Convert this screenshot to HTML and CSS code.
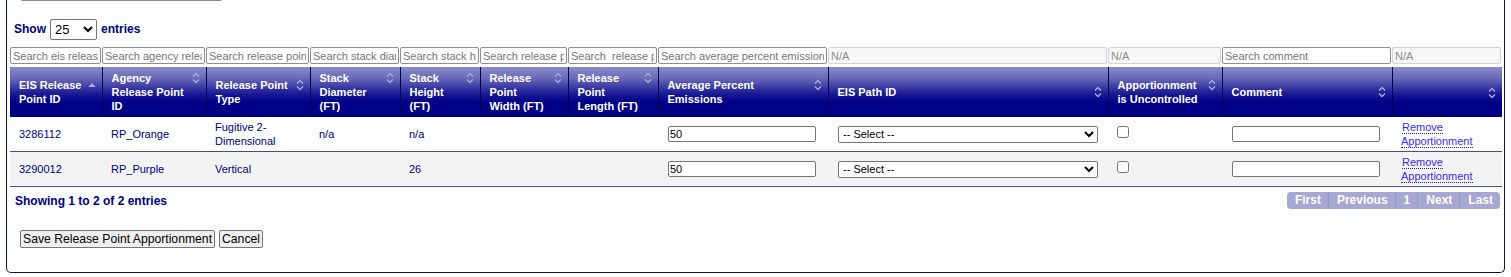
FILE: index.html
```html
<!DOCTYPE html>
<html lang="en">
<head>
    <meta charset="UTF-8">
    <title>Release Point Apportionment</title>
    <link rel="stylesheet" href="styles.css">
</head>
<body>
    <div class="panel">
        <div class="top-btn"></div>

        <div class="length">
            Show
            <select class="length-select">
                <option>25</option>
            </select>
            entries
        </div>

        <table class="grid">
            <colgroup>
                <col style="width:92px"><col style="width:104px"><col style="width:104px"><col style="width:90px">
                <col style="width:80px"><col style="width:88px"><col style="width:90px"><col style="width:170px">
                <col style="width:280px"><col style="width:114px"><col style="width:170px"><col style="width:110px">
            </colgroup>
            <thead>
                <tr class="filters">
                    <th><input class="filter" placeholder="Search eis release point id"></th>
                    <th><input class="filter" placeholder="Search agency release point id"></th>
                    <th><input class="filter" placeholder="Search release point type"></th>
                    <th><input class="filter" placeholder="Search stack diameter"></th>
                    <th><input class="filter" placeholder="Search stack height"></th>
                    <th><input class="filter" placeholder="Search release point width"></th>
                    <th><input class="filter" placeholder="Search  release point length"></th>
                    <th><input class="filter" placeholder="Search average percent emissions"></th>
                    <th><input class="filter na" value="N/A" disabled></th>
                    <th><input class="filter na" value="N/A" disabled></th>
                    <th><input class="filter" placeholder="Search comment"></th>
                    <th><input class="filter na" value="N/A" disabled></th>
                </tr>
                <tr class="heads">
                    <th><div class="sort"><span>EIS Release Point ID</span><i class="asc"></i></div></th>
                    <th><div class="sort"><span>Agency Release Point ID</span><i class="both"></i></div></th>
                    <th><div class="sort"><span>Release Point Type</span><i class="both"></i></div></th>
                    <th><div class="sort"><span>Stack Diameter (FT)</span><i class="both"></i></div></th>
                    <th><div class="sort"><span>Stack Height (FT)</span><i class="both"></i></div></th>
                    <th><div class="sort"><span>Release Point Width (FT)</span><i class="both"></i></div></th>
                    <th><div class="sort"><span>Release Point Length (FT)</span><i class="both"></i></div></th>
                    <th><div class="sort"><span>Average Percent Emissions</span><i class="both"></i></div></th>
                    <th><div class="sort"><span>EIS Path ID</span><i class="both"></i></div></th>
                    <th><div class="sort"><span>Apportionment is Uncontrolled</span><i class="both"></i></div></th>
                    <th><div class="sort"><span>Comment</span><i class="both"></i></div></th>
                    <th><div class="sort"><span></span><i class="both"></i></div></th>
                </tr>
            </thead>
            <tbody>
                <tr class="odd">
                    <td>3286112</td>
                    <td>RP_Orange</td>
                    <td>Fugitive 2-Dimensional</td>
                    <td>n/a</td>
                    <td>n/a</td>
                    <td></td>
                    <td></td>
                    <td><input class="field" value="50"></td>
                    <td><select class="path"><option>-- Select --</option></select></td>
                    <td><input type="checkbox" class="check"></td>
                    <td><input class="field"></td>
                    <td><a href="#" class="remove">Remove Apportionment</a></td>
                </tr>
                <tr class="even">
                    <td>3290012</td>
                    <td>RP_Purple</td>
                    <td>Vertical</td>
                    <td></td>
                    <td>26</td>
                    <td></td>
                    <td></td>
                    <td><input class="field" value="50"></td>
                    <td><select class="path"><option>-- Select --</option></select></td>
                    <td><input type="checkbox" class="check"></td>
                    <td><input class="field"></td>
                    <td><a href="#" class="remove">Remove Apportionment</a></td>
                </tr>
            </tbody>
        </table>

        <div class="table-foot">
            <div class="info">Showing 1 to 2 of 2 entries</div>
            <div class="paging">
                <span>First</span><span>Previous</span><span>1</span><span>Next</span><span>Last</span>
            </div>
        </div>

        <div class="actions">
            <button class="btn">Save Release Point Apportionment</button>
            <button class="btn">Cancel</button>
        </div>
    </div>
</body>
</html>
```

FILE: styles.css
```css
body {
    margin: 0;
    font-family: "Liberation Sans", Arial, sans-serif;
    background: #ffffff;
    color: #000080;
}

.panel {
    display: flow-root;
    margin-left: 6px;
    width: 1499px;
    height: 273px;
    box-sizing: border-box;
    border: 1px solid #10105e;
    border-top: none;
    border-radius: 0 0 5px 5px;
    background: #fcfefe;
    padding: 0 0 0 3px;
}

.top-btn {
    width: 201px;
    height: 18px;
    margin: -19px 0 0 10px;
    border: 1px solid #8a8a8a;
    border-radius: 3px;
    background: #f4f4f4;
}

.length {
    margin: 17px 0 0 4px;
    font-size: 12px;
    font-weight: bold;
    color: #000080;
    display: flex;
    align-items: center;
    gap: 4px;
    height: 22px;
}

.length-select {
    width: 47px;
    height: 21px;
    font-family: "Liberation Sans", Arial, sans-serif;
    font-size: 13px;
    color: #000;
    border: 1px solid #767676;
    border-radius: 2px;
    background: #fff;
}

.grid {
    margin-top: 7px;
    width: 1492px;
    table-layout: fixed;
    border-collapse: collapse;
    font-size: 11px;
}

.filters th {
    padding: 0 1px 3px 0;
    height: 20px;
    box-sizing: border-box;
}

.filter {
    display: block;
    width: 100%;
    height: 17px;
    box-sizing: border-box;
    margin: 0;
    padding: 0 2px;
    border: 1px solid #8f8f8f;
    border-radius: 2px;
    font-family: "Liberation Sans", Arial, sans-serif;
    font-size: 11px;
    color: #000;
    background: #fff;
}

.filter::placeholder {
    color: #767676;
}

.filter.na {
    background: #f6f6f6;
    border-color: #d4d4d4;
    color: #8d8d8d;
}

.heads th {
    height: 50px;
    padding: 0 6px 0 9px;
    box-sizing: border-box;
    text-align: left;
    vertical-align: middle;
    color: #ffffff;
    font-size: 11px;
    font-weight: bold;
    line-height: 14px;
    border-left: 1px solid #00004a;
    background: linear-gradient(#8a8ac9 0%, #6a6ab8 22%, #1d1d96 52%, #000088 70%, #000080 100%);
}

.heads th:first-child {
    border-left: none;
}

.sort {
    display: flex;
    align-items: flex-start;
    gap: 4px;
}

.sort span {
    flex: 1;
}

.sort i {
    width: 8px;
    height: 12px;
    margin-top: 1px;
    display: block;
    flex: none;
    background-repeat: no-repeat;
    background-position: center;
}

.sort i.both {
    background-image: url("data:image/svg+xml,%3Csvg xmlns='http://www.w3.org/2000/svg' width='8' height='12'%3E%3Cpath d='M1 4.5 L4 1.5 L7 4.5 M1 7.5 L4 10.5 L7 7.5' fill='none' stroke='%23a9a9d9' stroke-width='1.4'/%3E%3C/svg%3E");
}

.sort i.asc {
    background-image: url("data:image/svg+xml,%3Csvg xmlns='http://www.w3.org/2000/svg' width='8' height='12'%3E%3Cpath d='M0.5 8 L4 4 L7.5 8 Z' fill='%23a9a9d9'/%3E%3C/svg%3E");
}

tbody td {
    padding: 3px 10px 3px 9px;
    height: 34px;
    box-sizing: border-box;
    vertical-align: middle;
    line-height: 14px;
    color: #000080;
    border-bottom: 1px solid #4a4a86;
}

tbody tr.odd td {
    background: #fcfefe;
}

tbody tr.even td {
    background: #f3f3f3;
}

.field {
    display: block;
    width: 148px;
    height: 16px;
    box-sizing: border-box;
    margin: 0 0 0 1px;
    padding: 0 1px;
    border: 1px solid #767676;
    border-radius: 2px;
    font-family: "Liberation Sans", Arial, sans-serif;
    font-size: 11px;
    color: #000;
    background: #fff;
}

.path {
    display: block;
    width: 260px;
    height: 17px;
    margin: 0 0 0 1px;
    padding: 0;
    border: 1px solid #767676;
    border-radius: 2px;
    font-family: "Liberation Sans", Arial, sans-serif;
    font-size: 11px;
    color: #000;
    background: #fff;
}

.check {
    display: block;
    margin: -4px 0 0 0;
    width: 12px;
    height: 12px;
}

.remove {
    margin-left: 1px;
    color: #3a2cf2;
    text-decoration: none;
    border-bottom: 1px dotted #2a1aa0;
}

.table-foot {
    display: flex;
    justify-content: space-between;
    align-items: flex-start;
    padding: 5px 4px 0 5px;
}

.info {
    font-size: 12px;
    font-weight: bold;
    color: #000080;
    padding-top: 2px;
}

.paging {
    display: flex;
    height: 17px;
    background: #a7a7d3;
    border-radius: 4px;
    font-size: 12px;
    font-weight: bold;
    color: #fdfdff;
    line-height: 17px;
}

.paging span {
    padding: 0 7px 0 8px;
    border-left: 1px solid #9898c6;
}

.paging span:first-child {
    border-left: none;
}

.actions {
    margin: 21px 0 0 10px;
    display: flex;
    gap: 4px;
}

.btn {
    font-family: "Liberation Sans", Arial, sans-serif;
    font-size: 12.2px;
    color: #000;
    padding: 0 2px;
    height: 18px;
    line-height: 15px;
    border: 1px solid #767676;
    border-radius: 2px;
    background: #efefef;
}
```
